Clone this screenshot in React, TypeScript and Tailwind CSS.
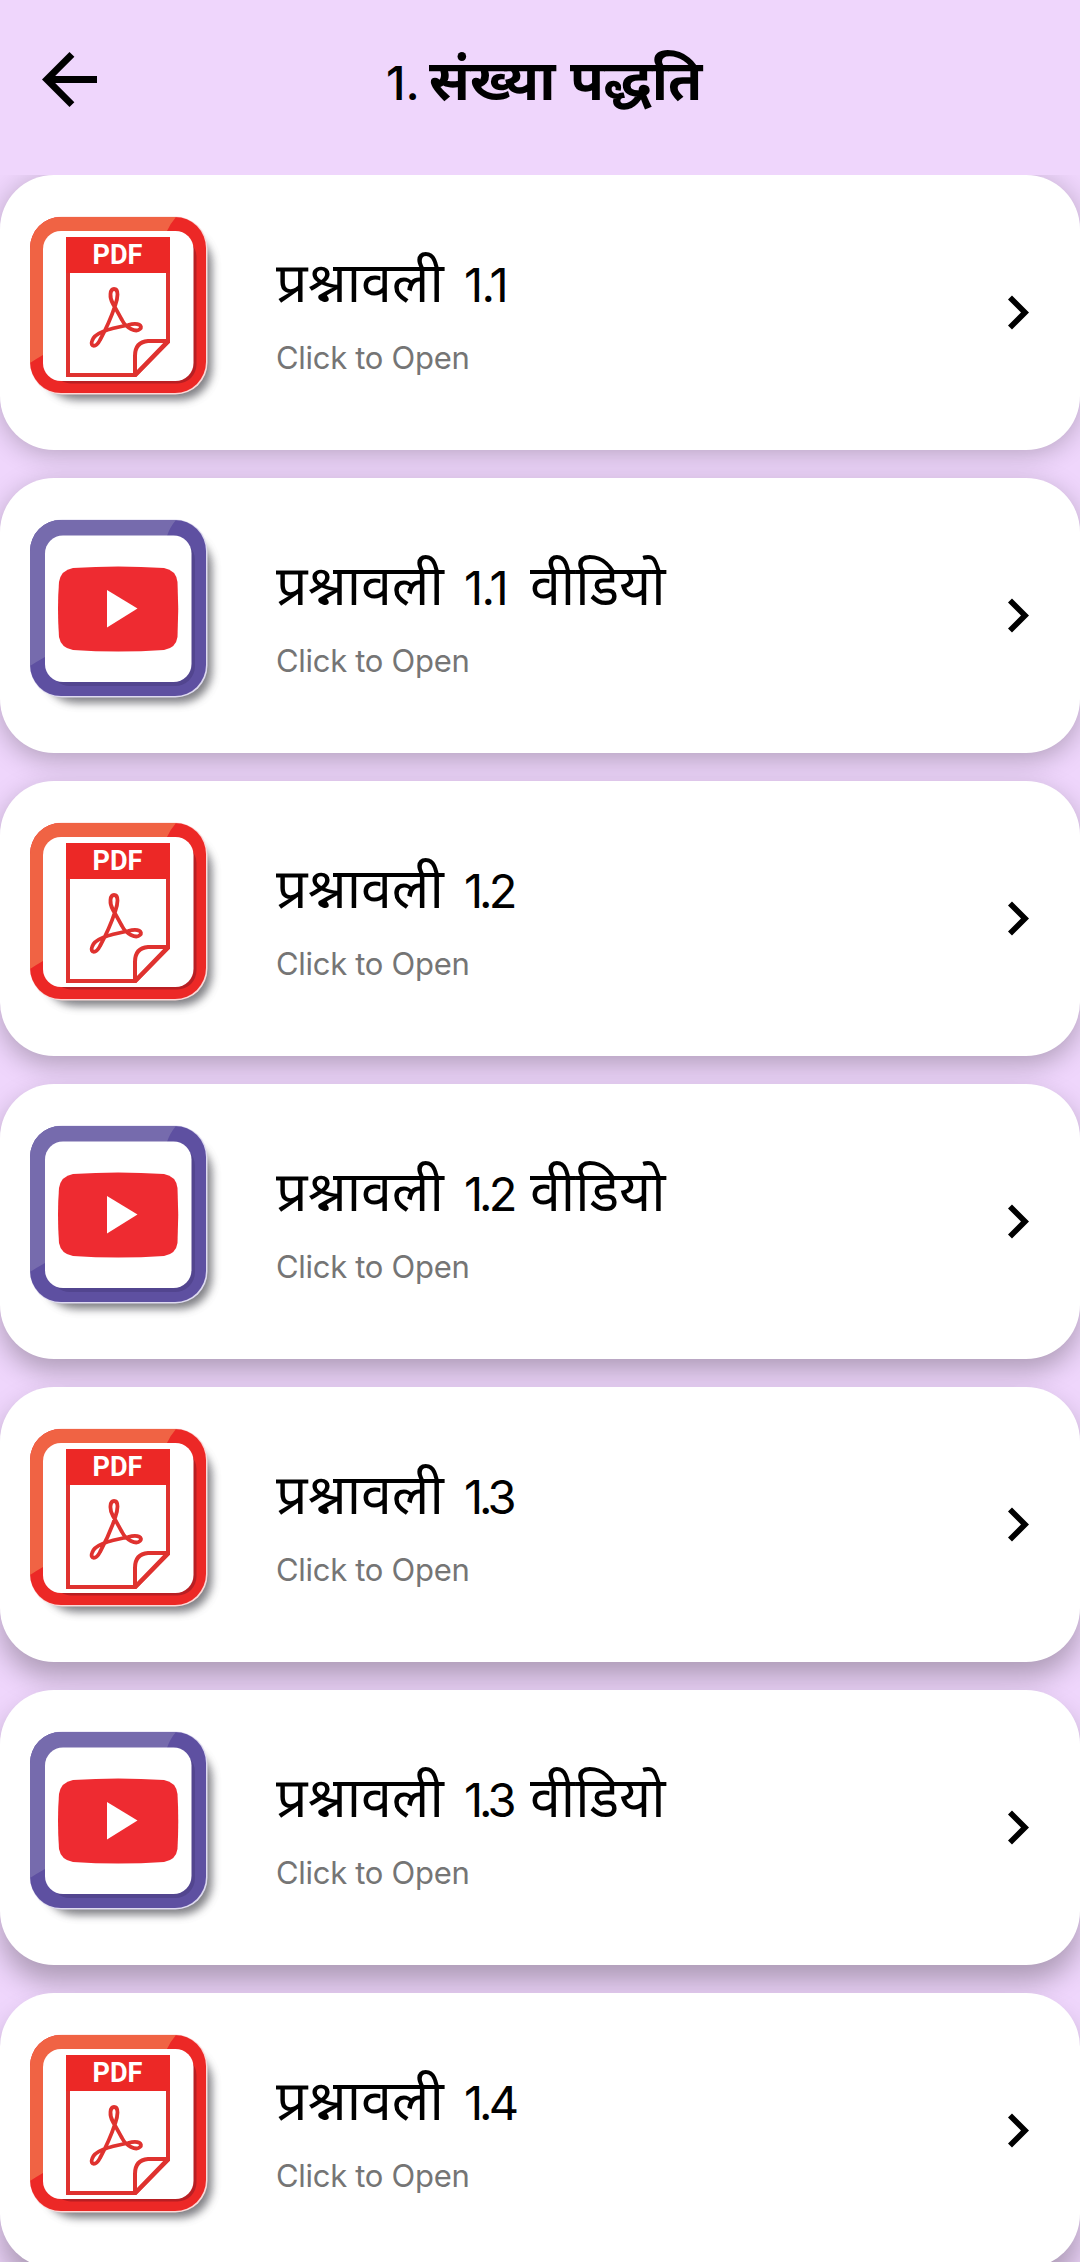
type ItemKind = "pdf" | "video";

interface Item {
  title: string;
  num: string;
  suffix?: string;
  kind: ItemKind;
  shadow: string;
}

const items: Item[] = [
  { title: "प्रश्नावली", num: "1.1", kind: "pdf", shadow: "shadow-[0_4px_26px_rgba(0,0,0,0.24)]" },
  { title: "प्रश्नावली", num: "1.1", suffix: "वीडियो", kind: "video", shadow: "shadow-[0_7px_26px_rgba(0,0,0,0.25)]" },
  { title: "प्रश्नावली", num: "1.2", kind: "pdf", shadow: "shadow-[0_9px_27px_rgba(0,0,0,0.26)]" },
  { title: "प्रश्नावली", num: "1.2", suffix: "वीडियो", kind: "video", shadow: "shadow-[0_12px_27px_rgba(0,0,0,0.27)]" },
  { title: "प्रश्नावली", num: "1.3", kind: "pdf", shadow: "shadow-[0_15px_28px_rgba(0,0,0,0.28)]" },
  { title: "प्रश्नावली", num: "1.3", suffix: "वीडियो", kind: "video", shadow: "shadow-[0_17px_28px_rgba(0,0,0,0.28)]" },
  { title: "प्रश्नावली", num: "1.4", kind: "pdf", shadow: "shadow-[0_20px_28px_rgba(0,0,0,0.28)]" },
];

function PdfIcon() {
  return (
    <svg viewBox="0 0 220 220" className="h-[220px] w-[220px] shrink-0 overflow-visible" aria-hidden="true">
      <defs>
        <clipPath id="pdf-frame">
          <rect x="20" y="17" width="176" height="176" rx="31" />
        </clipPath>
        <clipPath id="pdf-inner">
          <rect x="33" y="31" width="150.500" height="150" rx="18" />
        </clipPath>
        <filter id="soft" x="-20%" y="-20%" width="140%" height="140%">
          <feGaussianBlur stdDeviation="4" />
        </filter>
      </defs>
      <rect x="34" y="32" width="168" height="168" rx="32" fill="#55555c" opacity="0.75" filter="url(#soft)" />
      <rect x="20" y="16.500" width="177.500" height="178" rx="32" fill="#fbd9d8" />
      <g clipPath="url(#pdf-frame)">
        <rect x="20" y="17" width="176" height="177" fill="#ec2826" />
        <path d="M20 17H166Q160 24 157 31L100 120L33 155Q26 159 20 163Z" fill="#f06344" />
      </g>
      <rect x="42" y="38" width="144.500" height="145.500" rx="19" fill="#b81f23" />
      <rect x="33" y="31" width="150.500" height="150" rx="18" fill="#fff" />
      <g clipPath="url(#pdf-inner)">
        <path d="M58 39H158V142L125.500 175H58Z" fill="#fff" stroke="#df322f" strokeWidth="4" />
        <rect x="56" y="37" width="104" height="36" fill="#ec2826" />
        <path d="M158 141H138Q125 142 125 156V175Z" fill="#fff" stroke="#df322f" strokeWidth="4" strokeLinejoin="round" />
      </g>
      <text x="82.500" y="63.500" textLength="50" lengthAdjust="spacingAndGlyphs" fill="#fff" className="font-['Roboto'] text-[27px] font-bold">
        PDF
      </text>
      <path
        d="M103 104C99 97 100 89 104 89C109 89 108 98 105 106C101 118 96 129 90 140C86 148 80 147 82 141C84 133 98 129 118 125C129 122 133 126 130 129C126 133 116 128 112 120C108 113 106 109 103 104"
        fill="none"
        stroke="#df322f"
        strokeWidth="3.800"
        strokeLinejoin="round"
      />
    </svg>
  );
}

function VideoIcon() {
  return (
    <svg viewBox="0 0 220 220" className="h-[220px] w-[220px] shrink-0 overflow-visible" aria-hidden="true">
      <defs>
        <clipPath id="video-frame">
          <rect x="20" y="17" width="176" height="176" rx="31" />
        </clipPath>
        <filter id="soft-video" x="-20%" y="-20%" width="140%" height="140%">
          <feGaussianBlur stdDeviation="4" />
        </filter>
      </defs>
      <rect x="34" y="32" width="168" height="168" rx="32" fill="#55555c" opacity="0.75" filter="url(#soft-video)" />
      <rect x="20" y="16.500" width="177.500" height="178" rx="32" fill="#dedaf0" />
      <g clipPath="url(#video-frame)">
        <rect x="20" y="17" width="176" height="176" fill="#5e50a1" />
        <path d="M20 17H166Q160 24 157 33L100 120L35 154Q26 159 20 163Z" fill="#766bad" />
      </g>
      <rect x="40" y="37" width="145" height="146" rx="20" fill="#52458f" />
      <rect x="35" y="32.500" width="146.500" height="146.500" rx="18" fill="#fff" />
      <path
        d="M63 65Q108 62 154 65Q166 67 167.500 79Q169 106 167.500 134Q166 145 154 147Q108 150 63 147Q51 145 49 134Q47 106 49 79Q51 67 63 65Z"
        fill="#ee2b31"
      />
      <path d="M97 87L127.500 105.500L97 124.500Z" fill="#fff" />
    </svg>
  );
}

function ListCard({ item }: { item: Item }) {
  // two ones need looser tracking than a one and a wide digit
  const tracking = item.num === "1.1" ? "tracking-[-1.5px]" : "tracking-[-4px]";

  return (
    <button
      type="button"
      className={`flex h-[275px] w-full shrink-0 items-start rounded-[54px] bg-white pl-[10px] text-left ${item.shadow}`}
    >
      <div className="mt-[25px]">{item.kind === "pdf" ? <PdfIcon /> : <VideoIcon />}</div>
      <div className="ml-[46px] flex flex-1 flex-col pt-[75px]">
        <div className="flex h-[66px] items-baseline whitespace-pre text-[55.4px] leading-[70px] text-black">
          <span className="w-[188px] font-['Noto_Sans_Devanagari','Noto_Sans',sans-serif]">{item.title}</span>
          <span className={`w-[66px] font-['Inter',sans-serif] text-[47px] font-normal ${tracking}`}>{item.num}</span>
          {item.suffix && <span className="font-['Noto_Sans_Devanagari','Noto_Sans',sans-serif]">{item.suffix}</span>}
        </div>
        <p className="mt-[22px] font-['Inter',sans-serif] text-[31px] leading-[40px] font-normal tracking-[-0.3px] text-[#757575]">
          Click to Open
        </p>
      </div>
      <svg viewBox="8.59 6 7.41 12" className="mt-[120px] mr-[51px] h-[35px] w-[21px] shrink-0" aria-hidden="true">
        <path d="M10 6L8.590 7.410L13.170 12L8.590 16.590L10 18L16 12Z" fill="#000" />
      </svg>
    </button>
  );
}

export default function App() {
  return (
    <div className="flex h-[2262px] w-[1080px] flex-col overflow-hidden bg-[#efd6fc]">
      <header className="flex h-[175px] shrink-0 items-center">
        <button type="button" aria-label="Back" className="-mt-4 ml-[42px]">
          <svg viewBox="4 4 16 16" className="h-[55px] w-[55px]" aria-hidden="true">
            <path d="M20 11H7.830L13.420 5.410L12 4L4 12L12 20L13.410 18.590L7.830 13H20Z" fill="#000" />
          </svg>
        </button>
        <h1 className="-mt-1.5 ml-[289px] flex items-baseline text-[55.4px] leading-[70px] font-bold text-black">
          <span className="w-[43px] font-['Inter',sans-serif] text-[47px] font-medium">1.</span>
          <span className="font-['Noto_Sans_Devanagari','Noto_Sans',sans-serif]">संख्या पद्धति</span>
        </h1>
      </header>
      <main className="flex flex-1 flex-col gap-7 overflow-hidden">
        {items.map((item) => (
          <ListCard key={`${item.num}-${item.kind}`} item={item} />
        ))}
      </main>
    </div>
  );
}
